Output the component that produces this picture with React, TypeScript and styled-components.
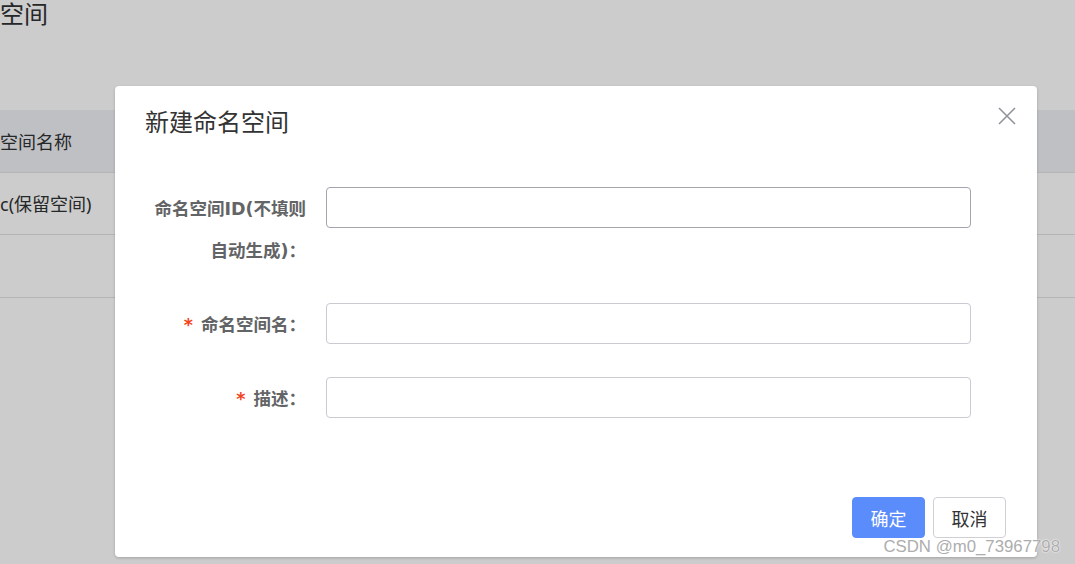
import styled, { createGlobalStyle } from 'styled-components';

const GlobalStyle = createGlobalStyle`
  html, body {
    margin: 0;
    padding: 0;
    background: #fff;
    font-family: "Noto Sans", "Noto Sans CJK SC", sans-serif;
    overflow: hidden;
  }
  * {
    box-sizing: border-box;
  }
`;

const Page = styled.div`
  width: 1075px;
  height: 564px;
  position: relative;
  overflow: hidden;
`;

const PageTitle = styled.h1`
  margin: 0;
  font-size: 24px;
  line-height: 28px;
  font-weight: 400;
  color: #303133;
`;

const Table = styled.div`
  margin-top: 82px;
  width: 100%;
`;

const Row = styled.div<{ $head?: boolean }>`
  display: flex;
  align-items: center;
  height: 62.5px;
  border-bottom: 1px solid #e3e3e3;
  background: ${({ $head }) => ($head ? '#eff0f5' : '#fff')};
  font-size: 18px;
  color: #303133;
`;

const Mask = styled.div`
  position: absolute;
  inset: 0;
  background: rgba(0, 0, 0, 0.2);
`;

const Dialog = styled.div`
  position: absolute;
  left: 115px;
  top: 86px;
  width: 922px;
  height: 471px;
  background: #fff;
  border-radius: 4px;
  box-shadow: 0 1px 3px rgba(0, 0, 0, 0.2);
  display: flex;
  flex-direction: column;
`;

const Header = styled.div`
  padding: 20px 30px;
  display: flex;
  justify-content: space-between;
  align-items: flex-start;
`;

const Title = styled.span`
  font-size: 24px;
  line-height: 32px;
  color: #333;
`;

const CloseButton = styled.button`
  position: absolute;
  top: 21px;
  right: 21px;
  width: 18px;
  height: 18px;
  padding: 0;
  border: none;
  background: transparent;
  cursor: pointer;
  svg {
    display: block;
  }
`;

const Form = styled.form`
  padding: 29px 66px 0 30px;
  display: flex;
  flex-direction: column;
  gap: 31px;
`;

const FormItem = styled.div`
  display: flex;
  align-items: flex-start;
`;

const Label = styled.label`
  width: 181px;
  flex-shrink: 0;
  padding: 1px 20px 0 0;
  text-align: right;
  font-family: "DejaVu Sans", "Noto Sans CJK SC", sans-serif;
  font-size: 17.5px;
  line-height: 42px;
  font-weight: 700;
  color: #636466;
`;

const Star = styled.span`
  color: #f2431c;
  margin-right: 8px;
`;

const Input = styled.input<{ $dark?: boolean }>`
  flex: 1;
  height: 41px;
  border: 1px solid ${({ $dark }) => ($dark ? '#a3a4ad' : '#cacad2')};
  border-radius: 4px;
  outline: none;
  padding: 0 14px;
  font-size: 16px;
  background: #fff;
`;

const Footer = styled.div`
  margin-top: auto;
  padding: 0 31px 19px 0;
  display: flex;
  justify-content: flex-end;
  gap: 8px;
`;

const Button = styled.button<{ $primary?: boolean }>`
  width: 73px;
  height: 41px;
  border-radius: 4px;
  font-family: "Noto Sans CJK SC", sans-serif;
  font-size: 18px;
  cursor: pointer;
  border: 1px solid ${({ $primary }) => ($primary ? '#5b8cfc' : '#cfcfd4')};
  background: ${({ $primary }) => ($primary ? '#5b8cfc' : '#fff')};
  color: ${({ $primary }) => ($primary ? '#fff' : '#333')};
`;

const Watermark = styled.span`
  position: absolute;
  right: 15px;
  bottom: 8px;
  font-family: "Liberation Sans", Arial, sans-serif;
  font-size: 16.8px;
  line-height: 18px;
  color: #adadad;
  text-shadow: 0 0 2px #fff, 0 0 1px #fff;
  pointer-events: none;
`;

export default function App() {
  return (
    <>
      <GlobalStyle />
      <Page>
        <PageTitle>空间</PageTitle>
        <Table>
          <Row $head>空间名称</Row>
          <Row>c(保留空间)</Row>
          <Row />
        </Table>
        <Mask />
        <Dialog>
          <Header>
            <Title>新建命名空间</Title>
            <CloseButton type='button' aria-label='关闭'>
              <svg width='18' height='18' viewBox='0 0 18 18'>
                <path
                  d='M1 1 L17 17 M17 1 L1 17'
                  stroke='#909399'
                  strokeWidth='1.6'
                  fill='none'
                />
              </svg>
            </CloseButton>
          </Header>
          <Form>
            <FormItem>
              <Label>命名空间ID(不填则自动生成)：</Label>
              <Input $dark />
            </FormItem>
            <FormItem>
              <Label>
                <Star>*</Star>命名空间名：
              </Label>
              <Input />
            </FormItem>
            <FormItem>
              <Label>
                <Star>*</Star>描述：
              </Label>
              <Input />
            </FormItem>
          </Form>
          <Footer>
            <Button type='button' $primary>
              确定
            </Button>
            <Button type='button'>取消</Button>
          </Footer>
        </Dialog>
        <Watermark>CSDN @m0_73967798</Watermark>
      </Page>
    </>
  );
}
